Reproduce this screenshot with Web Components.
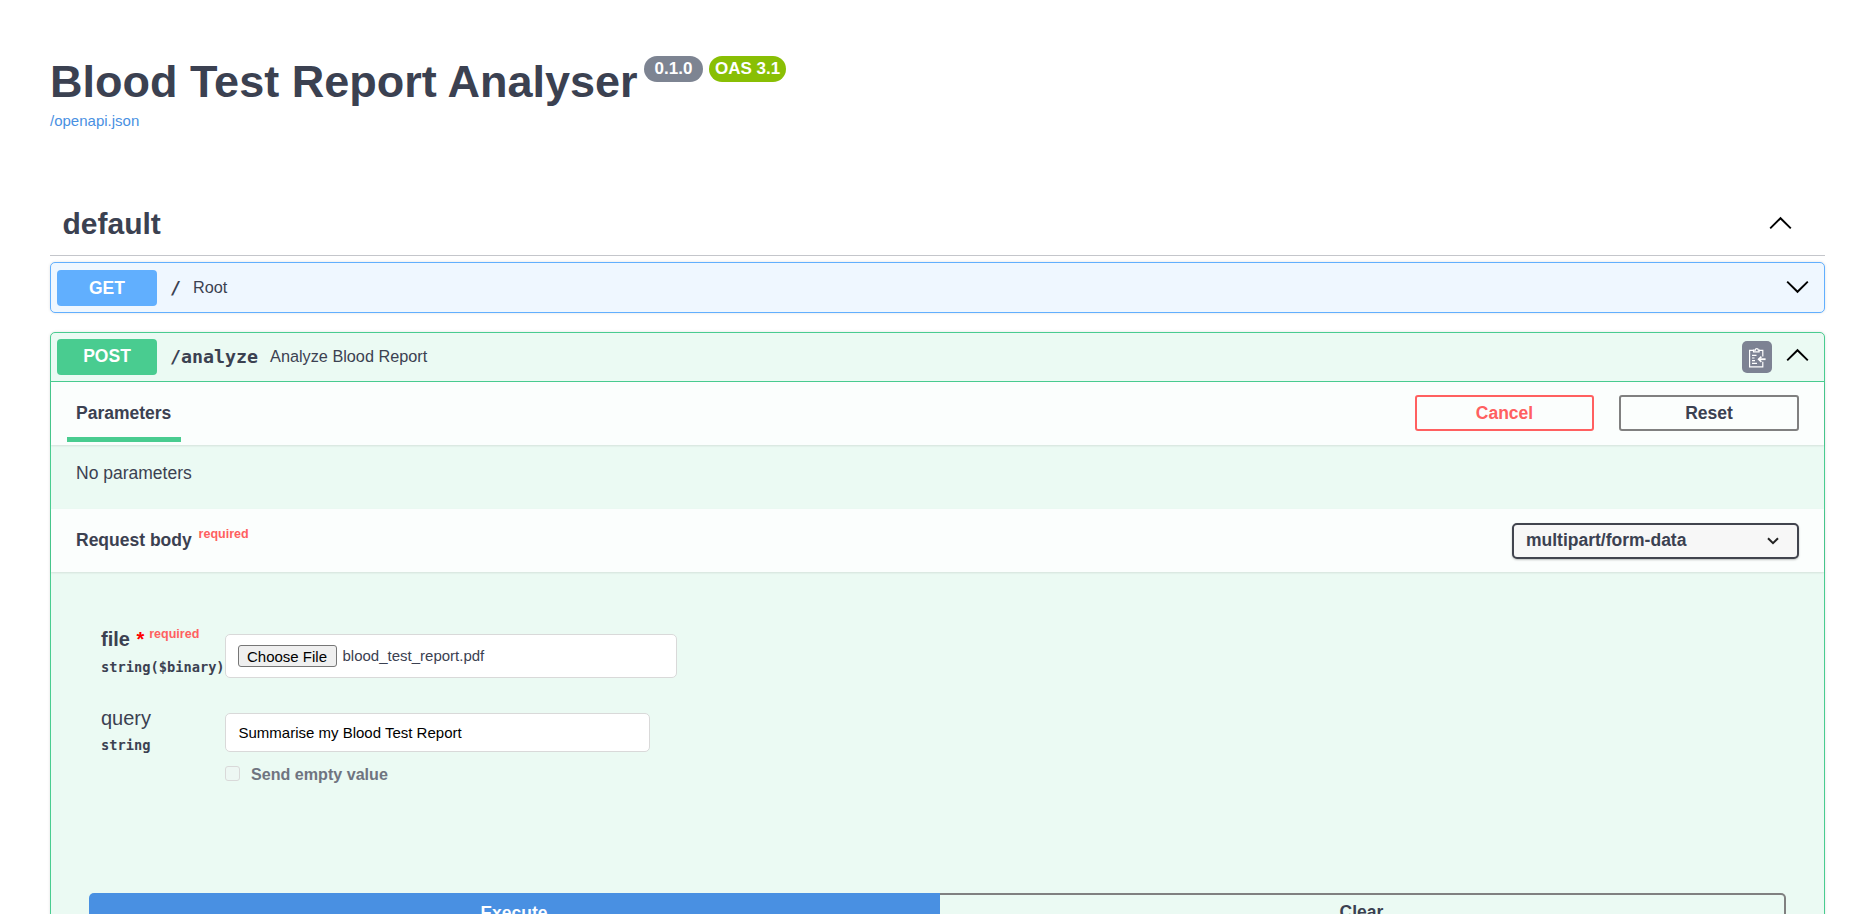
<!DOCTYPE html>
<html lang="en">
<head>
<meta charset="utf-8">
<title>Blood Test Report Analyser</title>
<style>
  html, body { margin: 0; height: 914px; overflow: hidden; background: #fff; }
  body { font-family: "Liberation Sans", Arial, sans-serif; color: #3b4151; }
</style>
</head>
<body>
<api-page>
  <api-info title="Blood Test Report Analyser" version="0.1.0" oas="OAS 3.1" spec="/openapi.json"></api-info>
  <api-tag name="default"></api-tag>
  <api-op method="GET" path="/" summary="Root"></api-op>
  <api-op method="POST" path="/analyze" summary="Analyze Blood Report" open>
    <try-tabs></try-tabs>
    <no-params></no-params>
    <body-header></body-header>
    <form-body>
      <form-row name="file" type="string($binary)" required>
        <file-field filename="blood_test_report.pdf"></file-field>
      </form-row>
      <form-row name="query" type="string">
        <text-field value="Summarise my Blood Test Report"></text-field>
      </form-row>
      <execute-bar></execute-bar>
    </form-body>
  </api-op>
</api-page>

<script>
// swagger's own arrow, drawn as a plain stroke
const chevron = (up, size = 25) => `
  <svg width="${size}" height="${size}" viewBox="0 0 25 25" fill="none" stroke="#000" stroke-width="1.9" aria-hidden="true">
    <path d="${up ? 'M2.2 18.4 12.5 8.2 22.8 18.4' : 'M2.2 7.6 12.5 17.8 22.8 7.6'}"/>
  </svg>`

/**
 * Small helper, every element below is the same: a style and some markup in an open root.
 */
const define = (name, render) => {
  customElements.define(name, class extends HTMLElement {
    connectedCallback () {
      if (this.shadowRoot) return
      this.attachShadow({ mode: 'open' }).innerHTML = render(this)
    }
  })
}

define('api-page', () => `
  <style>
    :host { display: block; padding: 0 50px; }
  </style>
  <slot></slot>
`)

define('api-info', (el) => `
  <style>
    :host { display: block; padding-top: 56px; height: 105px; margin-bottom: 30px; box-sizing: content-box; }
    .head { display: flex; align-items: flex-start; height: 52px; }
    h2 { margin: 0; font-size: 45px; line-height: 52px; font-weight: 700; color: #3b4151; }
    .badge { margin-top: 0; height: 26px; line-height: 26px; border-radius: 14px; color: #fff; font-size: 17px; font-weight: 700; }
    .version { margin-left: 6px; padding: 0 11px; background: #7d8492; }
    .oas { margin-left: 6px; padding: 0 5.5px; background: #89bf04; }
    a { display: block; margin-top: 4px; font-size: 15px; line-height: 18px; color: #4990e2; text-decoration: none; }
  </style>
  <div class="head">
    <h2>${el.getAttribute('title')}</h2>
    <span class="badge version">${el.getAttribute('version')}</span>
    <span class="badge oas">${el.getAttribute('oas')}</span>
  </div>
  <a href="#">${el.getAttribute('spec')}</a>
`)

define('api-tag', (el) => `
  <style>
    :host { display: flex; align-items: center; justify-content: space-between; box-sizing: content-box; height: 62px; padding: 0 32px 2px 12.5px; margin-bottom: 6px; border-bottom: 1px solid #c4c6cb; }
    h3 { margin: 4px 0 0; font-size: 30px; line-height: 36px; font-weight: 700; color: #3b4151; }
    svg { display: block; }
  </style>
  <h3>${el.getAttribute('name')}</h3>
  ${chevron(true)}
`)

define('api-op', (el) => {
  const get = el.getAttribute('method') === 'GET'
  const open = el.hasAttribute('open')
  const color = get ? '#61affe' : '#49cc90'
  return `
  <style>
    :host { display: block; margin-bottom: 19px; }
    .box { border: 1.25px solid ${color}; border-radius: 5px; background: ${get ? '#eff7ff' : '#ebfaf3'}; box-shadow: 0 0 3px rgba(0,0,0,.12); }
    .summary { display: flex; align-items: center; height: 49px; padding: 0 13.75px 0 6px; }
    .open { height: 48px; border-bottom: 1.25px solid ${color}; }
    .method { flex: none; box-sizing: border-box; width: 100px; height: 36px; line-height: ${open ? 35 : 36}px; text-align: center; border-radius: 4px; background: ${color}; color: #fff; font-size: 17.5px; font-weight: 700; }
    .path { margin: 0 0 ${open ? 2 : 0}px 13px; font: 700 18.3px "DejaVu Sans Mono", "Liberation Mono", monospace; color: #3b4151; }
    .desc { margin: 0 0 ${open ? 2 : 0}px 12px; font-size: 16.25px; color: #3b4151; flex: 1; }
    .copy { width: 30px; height: 32px; margin-right: 13.25px; border-radius: 5px; background: #7d8293; display: grid; place-items: center; }
    svg { display: block; }
    .summary > svg { margin-bottom: ${open ? 5 : 3}px; }
  </style>
  <div class="box">
    <div class="summary ${open ? 'open' : ''}">
      <span class="method">${el.getAttribute('method')}</span>
      <span class="path">${el.getAttribute('path')}</span>
      <span class="desc">${el.getAttribute('summary')}</span>
      ${open
        ? `<span class="copy">
            <svg width="18" height="21" viewBox="0 0 18 21" fill="none" stroke="#fff" stroke-width="1.2">
              <path d="M5.5 3.4H1.6v16.4h13.2v-5M14.8 9.6V3.4h-3.9"/>
              <path d="M5.5 4.8V3.2h1.8a1.5 1.5 0 0 1 3 0h.8v1.6z"/>
              <path d="M4 8.4h4.5M4 11h2.5M4 13.6h3M4 16.4h5"/>
              <path d="M17.6 12.2h-6.8" stroke-width="1.8"/>
              <path d="M13.4 9.6l-2.8 2.6 2.8 2.6" stroke-width="1.6"/>
            </svg>
          </span>`
        : ''}
      ${chevron(open)}
    </div>
    <slot></slot>
  </div>`
})

define('try-tabs', () => `
  <style>
    :host { display: flex; align-items: flex-start; justify-content: space-between; height: 63px; padding: 0 25px 0 16px; background: #fbfefd; box-shadow: 0 1px 2px rgba(0,0,0,.1); position: relative; }
    .tab { box-sizing: border-box; height: 60px; padding: 19px 10px 0 9px; border-bottom: 5px solid #49cc90; font-size: 17.5px; line-height: 24px; font-weight: 700; color: #3b4151; }
    .btns { display: flex; gap: 25px; padding-top: 13px; }
    .btn { box-sizing: border-box; width: 180px; height: 36px; line-height: 33px; text-align: center; border: 2.5px solid #808080; border-radius: 3px; font-size: 17.5px; font-weight: 700; color: #3b4151; }
    .cancel { width: 179px; border-color: #ff6060; color: #ff6060; }
  </style>
  <div class="tab">Parameters</div>
  <div class="btns"><span class="btn cancel">Cancel</span><span class="btn">Reset</span></div>
`)

define('no-params', () => `
  <style>
    :host { display: block; height: 64px; box-sizing: border-box; padding: 18px 25px 0; font-size: 17.5px; line-height: 20px; color: #3b4151; }
  </style>
  No parameters
`)

define('body-header', () => `
  <style>
    :host { display: flex; align-items: center; justify-content: space-between; height: 63px; padding: 0 25px; background: #fbfefd; box-shadow: 0 1px 2px rgba(0,0,0,.1); position: relative; }
    .title { font-size: 17.5px; font-weight: 700; color: #3b4151; }
    sup { font-size: 12.5px; font-weight: 700; color: #ff6060; position: relative; top: -8px; vertical-align: baseline; margin-left: 2px; }
    .select { box-sizing: border-box; width: 287px; height: 36px; padding: 0 18px 0 12px; display: flex; align-items: center; justify-content: space-between; border: 2.5px solid #41444e; border-radius: 5px; background: #f7f7f7; box-shadow: 0 1px 2px rgba(0,0,0,.25); font-size: 17.5px; font-weight: 700; color: #3b4151; }
    svg { display: block; }
  </style>
  <div class="title">Request body <sup>required</sup></div>
  <div class="select">multipart/form-data
    <svg width="12" height="8" viewBox="0 0 12 8" fill="none" stroke="#222" stroke-width="2"><path d="M1 1.2 6 6.2 11 1.2"/></svg>
  </div>
`)

define('form-body', () => `
  <style>
    :host { display: block; height: 500px; padding: 56px 0 0 50px; box-sizing: border-box; }
  </style>
  <slot></slot>
`)

define('form-row', (el) => {
  const required = el.hasAttribute('required')
  return `
  <style>
    :host { display: grid; grid-template-columns: 124px 1fr; min-height: 79px; }
    .name { height: 23px; font-size: 20px; line-height: 23px; color: #3b4151; font-weight: ${required ? 700 : 400}; white-space: nowrap; }
    .star { color: #f00; font-size: 20px; line-height: 1; margin-left: 1px; }
    .req { font-size: 12.5px; line-height: 1; font-weight: 700; color: #ff6060; position: relative; top: -8px; margin-left: 5px; }
    .type { margin-top: ${required ? 8 : 7}px; font: 700 13.7px/17px "DejaVu Sans Mono", "Liberation Mono", monospace; color: #3b4151; white-space: nowrap; }
    .val { padding-top: 6px; }
  </style>
  <div>
    <div class="name">${el.getAttribute('name')}${required ? '<span class="star"> *</span><span class="req">required</span>' : ''}</div>
    <div class="type">${el.getAttribute('type')}</div>
  </div>
  <div class="val"><slot></slot></div>`
})

define('file-field', (el) => `
  <style>
    :host { display: flex; align-items: center; box-sizing: border-box; width: 452px; height: 44px; padding-left: 11.5px; background: #fff; border: 1.25px solid #d9d9d9; border-radius: 5px; font-size: 15px; color: #3b4151; }
    button { box-sizing: border-box; width: 99px; height: 22px; margin: 0 6px 0 0; padding: 0; background: #efefef; border: 1px solid #767676; border-radius: 3px; font: 15px "Liberation Sans", Arial, sans-serif; color: #000; }
    span { position: relative; top: -1px; }
  </style>
  <button type="button">Choose File</button><span>${el.getAttribute('filename')}</span>
`)

define('text-field', (el) => `
  <style>
    :host { display: block; }
    .input { box-sizing: border-box; width: 425px; height: 39px; line-height: 37px; padding-left: 12.5px; background: #fff; border: 1.25px solid #d9d9d9; border-radius: 5px; font-size: 15px; color: #000; }
    .empty { display: flex; align-items: center; gap: 11px; margin-top: 14px; font-size: 16.1px; line-height: 16px; font-weight: 700; color: #6f7480; }
    .check { box-sizing: border-box; width: 15px; height: 15px; margin-top: -2px; border: 1.25px solid #d9d9d9; border-radius: 3px; background: #edf7f3; }
  </style>
  <div class="input">${el.getAttribute('value')}</div>
  <div class="empty"><span class="check"></span>Send empty value</div>
`)

define('execute-bar', () => `
  <style>
    :host { display: flex; width: 1697px; margin: 107px 0 0 -12.5px; }
    .btn { box-sizing: border-box; height: 50px; text-align: center; font-size: 17.5px; line-height: 20px; font-weight: 700; }
    .exec { flex: 0 0 851px; padding-top: 9.5px; background: #4990e2; color: #fff; border-radius: 5px 0 0 5px; }
    .clear { flex: 1; padding-top: 7px; border: 2.5px solid #808080; border-left: 0; border-radius: 0 5px 5px 0; color: #3b4151; }
  </style>
  <div class="btn exec">Execute</div><div class="btn clear">Clear</div>
`)
</script>
</body>
</html>
